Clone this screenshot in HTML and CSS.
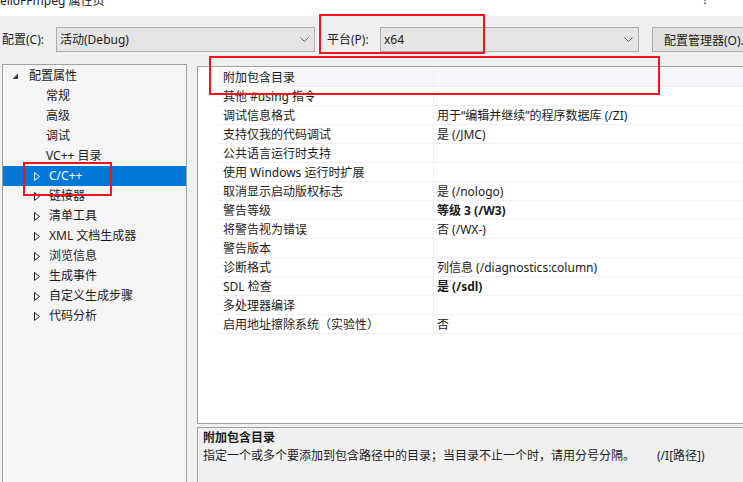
FILE: index.html
```html
<!DOCTYPE html>
<html lang="zh-CN">
<head>
<meta charset="utf-8">
<title>HelloFFmpeg 属性页</title>
<link rel="stylesheet" href="styles.css">
</head>
<body>
<div class="window">
  <div class="titlebar">
    <span class="title">HelloFFmpeg 属性页</span>
    <span class="help">?</span>
  </div>

  <div class="toolbar">
    <span class="lbl lbl-config">配置(C):</span>
    <div class="combo">
      <span class="combo-text">活动(Debug)</span>
      <svg class="chev" width="9" height="6" viewBox="0 0 9 6"><polyline points="0.5,0.5 4.5,4.5 8.5,0.5" fill="none" stroke="#606060" stroke-width="1"/></svg>
    </div>
    <span class="lbl lbl-platform">平台(P):</span>
    <div class="combo">
      <span class="combo-text">x64</span>
      <svg class="chev" width="9" height="6" viewBox="0 0 9 6"><polyline points="0.5,0.5 4.5,4.5 8.5,0.5" fill="none" stroke="#606060" stroke-width="1"/></svg>
    </div>
    <button class="btn">配置管理器(O)...</button>
  </div>

  <div class="main">
    <div class="tree">
      <div class="node root">
        <svg class="tri" width="7" height="7" viewBox="0 0 7 7"><polygon points="6,0.5 6,6 0.5,6" fill="#3c3c3c"/></svg>
        <span>配置属性</span>
      </div>
      <div class="node leaf"><span>常规</span></div>
      <div class="node leaf"><span>高级</span></div>
      <div class="node leaf"><span>调试</span></div>
      <div class="node leaf"><span>VC++ 目录</span></div>
      <div class="node child selected">
        <svg class="arr" width="6" height="9" viewBox="0 0 6 9"><polygon points="0.5,0.5 5.5,4.5 0.5,8.5" fill="none" stroke="#fff" stroke-width="1"/></svg>
        <span>C/C++</span>
      </div>
      <div class="node child">
        <svg class="arr" width="6" height="9" viewBox="0 0 6 9"><polygon points="0.5,0.5 5.5,4.5 0.5,8.5" fill="none" stroke="#1e1e1e" stroke-width="1"/></svg>
        <span>链接器</span>
      </div>
      <div class="node child">
        <svg class="arr" width="6" height="9" viewBox="0 0 6 9"><polygon points="0.5,0.5 5.5,4.5 0.5,8.5" fill="none" stroke="#1e1e1e" stroke-width="1"/></svg>
        <span>清单工具</span>
      </div>
      <div class="node child">
        <svg class="arr" width="6" height="9" viewBox="0 0 6 9"><polygon points="0.5,0.5 5.5,4.5 0.5,8.5" fill="none" stroke="#1e1e1e" stroke-width="1"/></svg>
        <span>XML 文档生成器</span>
      </div>
      <div class="node child">
        <svg class="arr" width="6" height="9" viewBox="0 0 6 9"><polygon points="0.5,0.5 5.5,4.5 0.5,8.5" fill="none" stroke="#1e1e1e" stroke-width="1"/></svg>
        <span>浏览信息</span>
      </div>
      <div class="node child">
        <svg class="arr" width="6" height="9" viewBox="0 0 6 9"><polygon points="0.5,0.5 5.5,4.5 0.5,8.5" fill="none" stroke="#1e1e1e" stroke-width="1"/></svg>
        <span>生成事件</span>
      </div>
      <div class="node child">
        <svg class="arr" width="6" height="9" viewBox="0 0 6 9"><polygon points="0.5,0.5 5.5,4.5 0.5,8.5" fill="none" stroke="#1e1e1e" stroke-width="1"/></svg>
        <span>自定义生成步骤</span>
      </div>
      <div class="node child">
        <svg class="arr" width="6" height="9" viewBox="0 0 6 9"><polygon points="0.5,0.5 5.5,4.5 0.5,8.5" fill="none" stroke="#1e1e1e" stroke-width="1"/></svg>
        <span>代码分析</span>
      </div>
    </div>

    <div class="right">
      <div class="grid">
        <div class="row current"><div class="gutter"></div><div class="name">附加包含目录</div><div class="value"></div></div>
        <div class="row"><div class="gutter"></div><div class="name">其他 #using 指令</div><div class="value"></div></div>
        <div class="row"><div class="gutter"></div><div class="name">调试信息格式</div><div class="value">用于“编辑并继续”的程序数据库 (/ZI)</div></div>
        <div class="row"><div class="gutter"></div><div class="name">支持仅我的代码调试</div><div class="value">是 (/JMC)</div></div>
        <div class="row"><div class="gutter"></div><div class="name">公共语言运行时支持</div><div class="value"></div></div>
        <div class="row"><div class="gutter"></div><div class="name">使用 Windows 运行时扩展</div><div class="value"></div></div>
        <div class="row"><div class="gutter"></div><div class="name">取消显示启动版权标志</div><div class="value">是 (/nologo)</div></div>
        <div class="row"><div class="gutter"></div><div class="name">警告等级</div><div class="value bold">等级 3 (/W3)</div></div>
        <div class="row"><div class="gutter"></div><div class="name">将警告视为错误</div><div class="value">否 (/WX-)</div></div>
        <div class="row"><div class="gutter"></div><div class="name">警告版本</div><div class="value"></div></div>
        <div class="row"><div class="gutter"></div><div class="name">诊断格式</div><div class="value">列信息 (/diagnostics:column)</div></div>
        <div class="row"><div class="gutter"></div><div class="name">SDL 检查</div><div class="value bold">是 (/sdl)</div></div>
        <div class="row"><div class="gutter"></div><div class="name">多处理器编译</div><div class="value"></div></div>
        <div class="row"><div class="gutter"></div><div class="name">启用地址擦除系统（实验性）</div><div class="value">否</div></div>
      </div>
      <div class="desc">
        <div class="desc-title">附加包含目录</div>
        <div class="desc-text">指定一个或多个要添加到包含路径中的目录；当目录不止一个时，请用分号分隔。<span class="desc-switch">(/I[路径])</span></div>
      </div>
    </div>
  </div>

  <div class="mark mark-platform"></div>
  <div class="mark mark-row"></div>
  <div class="mark mark-tree"></div>
</div>
</body>
</html>
```

FILE: styles.css
```css
* { box-sizing: border-box; }
html, body { margin: 0; padding: 0; }
body {
  width: 743px;
  height: 482px;
  overflow: hidden;
  background: #f0f0f0;
  font-family: "Noto Sans", "Noto Sans CJK SC", sans-serif;
  font-size: 12px;
  color: #1b1b1b;
}
.window {
  position: relative;
  width: 743px;
  height: 482px;
  overflow: hidden;
}

/* title bar */
.titlebar {
  height: 16px;
  background: #fff;
  display: flex;
  justify-content: space-between;
  overflow: hidden;
}
.title {
  margin-left: -9px;
  margin-top: -7px;
  line-height: 16px;
  white-space: nowrap;
}
.help {
  margin-right: 35px;
  margin-top: -8px;
  line-height: 16px;
}

/* toolbar */
.toolbar {
  display: flex;
  align-items: center;
  padding: 11px 0 0 2px;
}
.lbl {
  flex: none;
  line-height: 25px;
  white-space: nowrap;
}
.lbl-config { width: 54px; }
.lbl-platform { width: 53px; margin-left: 12px; }
.combo {
  flex: none;
  width: 259px;
  height: 25px;
  background: #e5e5e5;
  border: 1px solid #adadad;
  display: flex;
  align-items: center;
  justify-content: space-between;
  padding: 0 5px 0 3px;
}
.combo-text { line-height: 23px; }
.chev { display: block; }
.btn {
  margin-left: 13px;
  width: 104px;
  height: 25px;
  flex: none;
  background: #e1e1e1;
  border: 1px solid #adadad;
  font: inherit;
  color: inherit;
  padding: 0 0 0 11px;
  text-align: left;
  white-space: nowrap;
}

/* main */
.main {
  display: flex;
  margin-top: 12px;
}
.tree {
  flex: none;
  margin-left: 2px;
  width: 185px;
  height: 440px;
  background: #f5f5f5;
  border: 1px solid #a0a0a0;
  padding-top: 1px;
}
.node {
  height: 20px;
  display: flex;
  align-items: center;
  line-height: 20px;
  white-space: nowrap;
}
.root { padding-left: 9px; }
.root .tri { margin-right: 10px; }
.leaf { padding-left: 43px; }
.child { padding-left: 31px; }
.child .arr { margin-right: 9px; display: block; }
.selected {
  background: #0078d7;
  color: #fff;
}

.right {
  flex: none;
  width: 560px;
  margin-left: 10px;
  margin-top: 2px;
  display: flex;
  flex-direction: column;
}
.grid {
  flex: none;
  height: 358px;
  background: #fff;
  border: 1px solid #a0a0a0;
  padding-top: 1px;
}
.row {
  display: flex;
  height: 19px;
}
.gutter {
  width: 20px;
  flex: none;
}
.name,
.value {
  height: 19px;
  padding-top: 2px;
  line-height: 16px;
  white-space: nowrap;
  border-bottom: 1px solid #eef0f4;
}
.name {
  width: 215px;
  flex: none;
  padding-left: 5px;
}
.value {
  flex: 1;
  padding-left: 3px;
  border-left: 1px solid #eef0f4;
}
.bold { font-weight: 700; }
.current .name,
.current .value { background: #f4f6fa; }

.desc {
  margin-top: 3px;
  height: 70px;
  background: #f0f0f0;
  border: 1px solid #a0a0a0;
  padding: 1px 0 0 5px;
}
.desc-title {
  font-weight: 700;
  line-height: 18px;
}
.desc-text {
  line-height: 18px;
  white-space: nowrap;
}
.desc-switch { margin-left: 22px; }

/* red annotation boxes drawn over the screenshot */
.mark {
  position: absolute;
  border: 2px solid #f0141e;
  pointer-events: none;
}
.mark-platform { left: 319px; top: 14px; width: 166px; height: 40px; }
.mark-row { left: 209px; top: 56px; width: 451px; height: 39px; }
.mark-tree { left: 23px; top: 162px; width: 89px; height: 34px; }
```
